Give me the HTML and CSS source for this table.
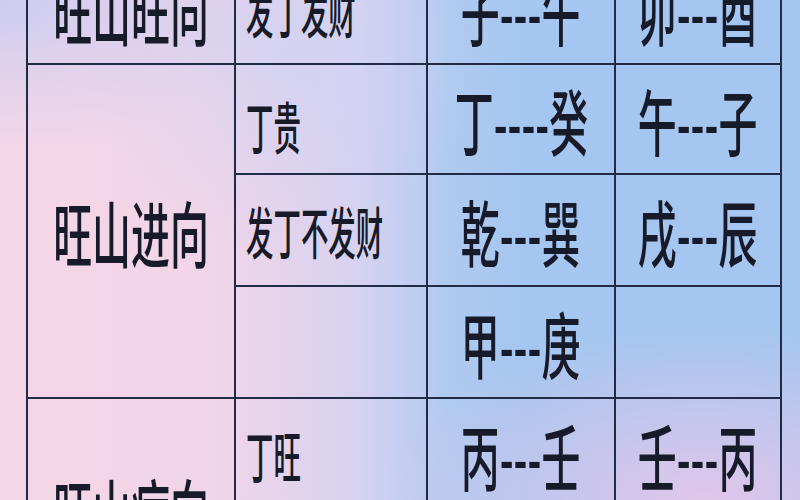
FILE: index.html
```html
<!DOCTYPE html>
<html lang="zh-CN">
<head>
<meta charset="utf-8">
<title>旺山旺向</title>
<link rel="stylesheet" href="styles.css">
</head>
<body>
<div class="page">
  <div class="table">
    <div class="cell c1 r1"><span class="big">旺山旺向</span></div>
    <div class="cell c2 r1"><span class="mid">发丁发财</span></div>
    <div class="cell c3 r1"><span class="big">子---午</span></div>
    <div class="cell c4 r1"><span class="big">卯---酉</span></div>

    <div class="cell c1 g2"><span class="big">旺山进向</span></div>
    <div class="cell c2 r2 low"><span class="mid">丁贵</span></div>
    <div class="cell c3 r2"><span class="big">丁----癸</span></div>
    <div class="cell c4 r2"><span class="big">午---子</span></div>

    <div class="cell c2 r3"><span class="mid">发丁不发财</span></div>
    <div class="cell c3 r3"><span class="big">乾---巽</span></div>
    <div class="cell c4 r3"><span class="big">戌---辰</span></div>

    <div class="cell c2 r4"></div>
    <div class="cell c3 r4"><span class="big">甲---庚</span></div>
    <div class="cell c4 r4"></div>

    <div class="cell c1 g3"><span class="big">旺山病向</span></div>
    <div class="cell c2 r5"><span class="mid">丁旺</span></div>
    <div class="cell c3 r5"><span class="big">丙---壬</span></div>
    <div class="cell c4 r5"><span class="big">壬---丙</span></div>
  </div>
</div>
</body>
</html>
```

FILE: styles.css
```css
html, body {
  margin: 0;
  padding: 0;
}
body {
  width: 800px;
  height: 500px;
  overflow: hidden;
  font-family: "Noto Sans CJK SC", "Noto Sans", sans-serif;
  color: #171a28;
}
.page {
  width: 800px;
  height: 500px;
  overflow: hidden;
  background:
    radial-gradient(ellipse 40% 35% at 88% 100%, rgba(232, 198, 234, 0.9), rgba(232, 198, 234, 0) 100%),
    radial-gradient(ellipse 35% 30% at 0% 0%, rgba(200, 204, 242, 0.9), rgba(200, 204, 242, 0) 100%),
    radial-gradient(ellipse 25% 40% at 35% 10%, rgba(205, 210, 244, 0.7), rgba(205, 210, 244, 0) 100%),
    linear-gradient(90deg, #f5d6e7 0%, #f2d5e8 26%, #d6d2f1 45%, #b0caf0 56%, #a4c6f0 66%, #a4c6f0 100%);
}
.table {
  display: grid;
  grid-template-columns: 208px 192px 188px 166px;
  grid-template-rows: 111px 110px 112px 112px 111px 111px;
  margin-left: 26px;
  margin-top: -46px;
  width: 756px;
  box-sizing: border-box;
  border-left: 2px solid #222b45;
}
.cell {
  box-sizing: border-box;
  border-right: 2px solid #222b45;
  border-bottom: 2px solid #222b45;
  display: flex;
  align-items: center;
  justify-content: center;
  overflow: visible;
  white-space: nowrap;
  min-width: 0;
}
.c1 { grid-column: 1; }
.c2 { grid-column: 2; justify-content: flex-start; padding-left: 10px; }
.c3 { grid-column: 3; }
.c4 { grid-column: 4; }
.r1 { grid-row: 1; }
.r2 { grid-row: 2; }
.r3 { grid-row: 3; }
.r4 { grid-row: 4; }
.r5 { grid-row: 5; }
.g2 { grid-row: 2 / span 3; }
.g3 { grid-row: 5 / span 2; }
.low { padding-top: 12px; }
.big {
  display: inline-block;
  font-size: 72px;
  font-weight: 500;
  line-height: 1;
  transform: scaleX(0.54);
  transform-origin: center center;
  flex: none;
}
.mid {
  display: inline-block;
  font-size: 56px;
  font-weight: 500;
  line-height: 1;
  transform: scaleX(0.49);
  transform-origin: left center;
  flex: none;
}
```
